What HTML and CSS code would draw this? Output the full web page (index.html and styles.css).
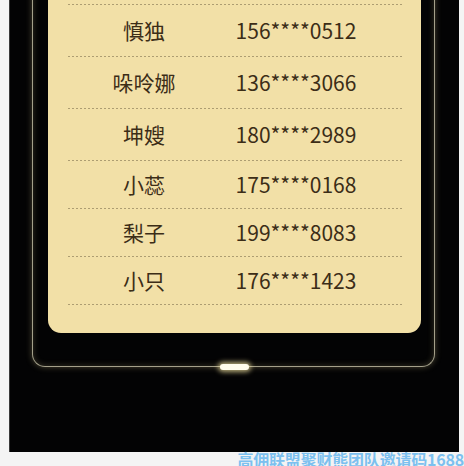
FILE: index.html
```html
<!DOCTYPE html>
<html lang="zh-CN">
<head>
<meta charset="utf-8">
<title>邀请记录</title>
<link rel="stylesheet" href="styles.css">
</head>
<body>
<div class="page">
  <div class="frame">
    <div class="card">
      <div class="list">
        <div class="row"><span class="name">慎独</span><span class="phone">156****0512</span></div>
        <div class="row"><span class="name">哚呤娜</span><span class="phone">136****3066</span></div>
        <div class="row"><span class="name">坤嫂</span><span class="phone">180****2989</span></div>
        <div class="row row-short"><span class="name">小蕊</span><span class="phone">175****0168</span></div>
        <div class="row row-short"><span class="name">梨子</span><span class="phone">199****8083</span></div>
        <div class="row row-short"><span class="name">小只</span><span class="phone">176****1423</span></div>
      </div>
    </div>
    <div class="home-bar"></div>
  </div>
</div>
<div class="watermark">高佣联盟聚财熊团队邀请码1688</div>
</body>
</html>
```

FILE: styles.css
```css
* { box-sizing: border-box; }
html, body {
  margin: 0;
  padding: 0;
  background: #f4f4f4;
  font-family: "Noto Sans CJK SC", "Noto Sans", sans-serif;
  overflow: hidden;
}
.page {
  margin-left: 9px;
  width: 450px;
  height: 452px;
  background: #030304;
  overflow: hidden;
  border-left: 1px solid #3a3a3a;
}
.frame {
  position: relative;
  margin-top: -20px;
  margin-left: 22px;
  width: 403px;
  border: 1px solid #a4a08a;
  border-top: none;
  border-radius: 0 0 13px 13px;
  padding: 0 13px 33px 15px;
  box-shadow: 0 0 6px rgba(214, 200, 140, 0.35), inset 0 0 6px rgba(214, 200, 140, 0.25);
}
.card {
  background: #f2e0a7;
  border-radius: 0 0 13px 13px;
  padding: 24px 19px 28px 20px;
}
.list {
  background-image: repeating-linear-gradient(to right, #ad9d72 0 2px, transparent 2px 4px);
  background-size: 100% 1px;
  background-repeat: no-repeat;
  background-position: left top;
  padding-top: 1px;
}
.row {
  display: grid;
  grid-template-columns: 152px 152px 1fr;
  align-items: center;
  height: 52px;
  padding-bottom: 1px;
  background-image: repeating-linear-gradient(to right, #ad9d72 0 2px, transparent 2px 4px);
  background-size: 100% 1px;
  background-repeat: no-repeat;
  background-position: left bottom;
  color: #3c2d17;
  font-size: 21px;
  font-weight: 400;
  line-height: 1;
}
.row-short { height: 48px; }
.name, .phone { text-align: center; }
.home-bar {
  position: absolute;
  left: 50%;
  bottom: -4px;
  width: 29px;
  height: 6px;
  margin-left: -14px;
  border-radius: 3px;
  background: #fffcec;
  box-shadow: 0 0 5px 2px rgba(255, 240, 170, 0.7);
}
.watermark {
  text-align: right;
  color: #7cc0ef;
  font-size: 16px;
  font-weight: 700;
  line-height: 14px;
  letter-spacing: -0.2px;
  white-space: nowrap;
}
```
